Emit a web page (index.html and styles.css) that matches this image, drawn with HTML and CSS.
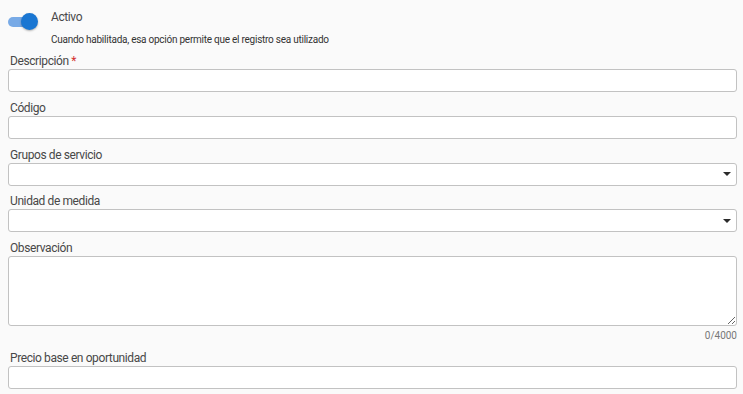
FILE: index.html
```html
<!DOCTYPE html>
<html lang="es">
<head>
    <meta charset="UTF-8">
    <meta name="viewport" content="width=device-width, initial-scale=1.0">
    <title> Servicio </title>
    <link rel="stylesheet" href="styles.css">
</head>
<body>
    <!-- Activo switch -->
    <div class="switch-row">
        <div class="switch">
            <div class="switch-track"></div>
            <div class="switch-thumb"></div>
        </div>
        <div class="switch-text">
            <div class="switch-label">Activo</div>
            <div class="switch-hint">Cuando habilitada, esa opción permite que el registro sea utilizado</div>
        </div>
    </div>

    <!-- Fields -->
    <div class="field">
        <label class="field-label">Descripción <span class="required">*</span></label>
        <input class="text-input" type="text">
    </div>

    <div class="field">
        <label class="field-label">Código</label>
        <input class="text-input" type="text">
    </div>

    <div class="field">
        <label class="field-label">Grupos de servicio</label>
        <div class="select-input"><span class="select-arrow"></span></div>
    </div>

    <div class="field">
        <label class="field-label">Unidad de medida</label>
        <div class="select-input"><span class="select-arrow"></span></div>
    </div>

    <div class="field">
        <label class="field-label">Observación</label>
        <textarea class="text-area"></textarea>
        <div class="counter">0/4000</div>
    </div>

    <div class="field">
        <label class="field-label">Precio base en oportunidad</label>
        <input class="text-input" type="text">
    </div>
</body>
</html>
```

FILE: styles.css
```css
body {
    margin: 0;
    padding: 10px 6px 0 8px;
    background-color: #fafafa;
    font-family: Roboto, "Noto Sans", Arial, sans-serif;
    color: #484848;
}

/* Activo switch */
.switch-row {
    display: flex;
    align-items: flex-start;
    margin-bottom: 8px;
}
.switch {
    position: relative;
    width: 34px;
    height: 20px;
    margin-top: 2px;
    flex-shrink: 0;
}
.switch-track {
    position: absolute;
    left: 0;
    top: 5px;
    width: 27px;
    height: 10px;
    border-radius: 5px;
    background-color: #78aae6;
}
.switch-thumb {
    position: absolute;
    left: 13px;
    top: 1px;
    width: 17px;
    height: 17px;
    border-radius: 50%;
    background-color: #1976d2;
    box-shadow: 0 1px 2px rgba(0, 0, 0, 0.3);
}
.switch-text {
    margin-left: 9px;
}
.switch-label {
    font-size: 12px;
    line-height: 14px;
    letter-spacing: -0.4px;
    color: #484848;
}
.switch-hint {
    margin-top: 10px;
    font-size: 10px;
    line-height: 12px;
    letter-spacing: -0.25px;
    color: #333;
    white-space: nowrap;
}

/* Form fields */
.field {
    margin-bottom: 8.75px;
}
.field-label {
    display: block;
    font-size: 12px;
    line-height: 14px;
    letter-spacing: -0.4px;
    margin: 0 0 1px 2px;
    color: #484848;
}
.required {
    color: #d32f2f;
}
.text-input,
.select-input,
.text-area {
    display: block;
    box-sizing: border-box;
    width: 100%;
    margin: 0;
    background-color: #fff;
    border: 1px solid #c2c2c2;
    border-radius: 3px;
    font-family: inherit;
    font-size: 12px;
    outline: none;
}
.text-input,
.select-input {
    height: 23px;
}
.select-input {
    display: flex;
    align-items: center;
    justify-content: flex-end;
    padding-right: 5px;
}
.select-arrow {
    width: 0;
    height: 0;
    border-left: 4px solid transparent;
    border-right: 4px solid transparent;
    border-top: 4px solid #2b2b2b;
}
.text-area {
    height: 70px;
    resize: vertical;
}
.counter {
    margin-top: 3px;
    text-align: right;
    font-size: 10px;
    line-height: 13px;
    color: #777;
}
```
